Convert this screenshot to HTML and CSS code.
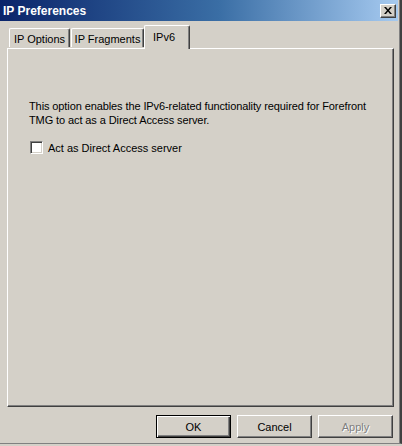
FILE: index.html
```html
<!DOCTYPE html>
<html>
<head>
<meta charset="utf-8">
<link rel="stylesheet" href="styles.css">
</head>
<body>
<div class="window">
  <div class="titlebar">
    <span class="title">IP Preferences</span>
    <span class="close">
      <svg width="8" height="7" viewBox="0 0 8 7"><path d="M0 0h2l2 2.5L6 0h2L5 3.5 8 7H6L4 4.5 2 7H0l3-3.5z" fill="#000"/></svg>
    </span>
  </div>
  <div class="body">
    <div class="tabs">
      <div class="tab t1">IP Options</div>
      <div class="tab t2">IP Fragments</div>
      <div class="tab t3 selected">IPv6</div>
    </div>
    <div class="panel">
      <p class="desc">This option enables the IPv6-related functionality required for Forefront TMG to act as a Direct Access server.</p>
      <label class="check"><span class="box"></span><span>Act as Direct Access server</span></label>
    </div>
    <div class="buttons">
      <div class="btn default"><span>OK</span></div>
      <div class="btn"><span>Cancel</span></div>
      <div class="btn disabled"><span>Apply</span></div>
    </div>
  </div>
</div>
</body>
</html>
```
FILE: styles.css
```css
html, body {
  margin: 0;
  padding: 0;
  background: #d4d0c8;
}
.window {
  width: 400px;
  height: 443px;
  background: #d4d0c8;
  border-right: 2px solid #404040;
  border-bottom: 1px solid #808080;
  box-shadow: inset -1px 0 0 #808080;
  display: flex;
  flex-direction: column;
  font-family: "Liberation Sans", Arial, sans-serif;
  font-size: 11px;
  color: #000;
  overflow: hidden;
}
.titlebar {
  height: 21px;
  margin-right: 2px;
  background: linear-gradient(to right, #0a246a 0%, #3a6ea5 55%, #a6caf0 100%);
  display: flex;
  align-items: center;
  padding-left: 3px;
  padding-right: 2px;
}
.title {
  color: #fff;
  font-weight: bold;
  font-size: 12px;
}
.close {
  margin-left: auto;
  width: 14px;
  height: 12px;
  background: #d4d0c8;
  border-top: 1px solid #fff;
  border-left: 1px solid #fff;
  border-right: 1px solid #404040;
  border-bottom: 1px solid #404040;
  box-shadow: inset -1px -1px 0 #808080;
  display: flex;
  align-items: center;
  justify-content: center;
}
.body {
  flex: 1;
  display: flex;
  flex-direction: column;
  padding: 3px 6px 0 7px;
}
.tabs {
  display: flex;
  align-items: flex-end;
  height: 24px;
  padding-left: 2px;
  position: relative;
  z-index: 1;
}
.tab {
  height: 19px;
  box-sizing: border-box;
  border-top: 1px solid #fff;
  border-left: 1px solid #fff;
  border-right: 1px solid #404040;
  border-radius: 2px 2px 0 0;
  box-shadow: inset -1px 0 0 #808080;
  display: flex;
  align-items: center;
  justify-content: center;
  padding-top: 1px;
  margin-bottom: 1px;
}
.t1 { width: 61px; }
.t2 { width: 73px; margin-left: 1px; }
.t3 { width: 46px; }
.tab.selected {
  height: 24px;
  margin-bottom: -1px;
  background: #d4d0c8;
  padding-bottom: 3px;
  padding-right: 6px;
}
.panel {
  height: 359px;
  box-sizing: border-box;
  border-top: 1px solid #fff;
  border-left: 1px solid #fff;
  border-right: 1px solid #404040;
  border-bottom: 1px solid #404040;
  box-shadow: inset -1px -1px 0 #808080;
  padding: 50px 2px 0 21px;
}
.desc {
  margin: 0;
  line-height: 14px;
  letter-spacing: -0.1px;
}
.check {
  display: flex;
  align-items: center;
  margin-top: 14px;
  margin-left: 1px;
  height: 13px;
}
.box {
  width: 13px;
  height: 13px;
  box-sizing: border-box;
  background: #fff;
  border-top: 1px solid #808080;
  border-left: 1px solid #808080;
  border-right: 1px solid #fff;
  border-bottom: 1px solid #fff;
  box-shadow: inset 1px 1px 0 #404040, inset -1px -1px 0 #d4d0c8;
  margin-right: 5px;
}
.buttons {
  display: flex;
  justify-content: flex-end;
  gap: 6px;
  margin-top: 8px;
  padding-right: 1px;
}
.btn {
  width: 75px;
  height: 23px;
  box-sizing: border-box;
  border-top: 1px solid #fff;
  border-left: 1px solid #fff;
  border-right: 1px solid #404040;
  border-bottom: 1px solid #404040;
  box-shadow: inset -1px -1px 0 #808080;
  display: flex;
  align-items: center;
  justify-content: center;
}
.btn.default {
  border: 1px solid #000;
  box-shadow: inset 1px 1px 0 #fff, inset -1px -1px 0 #404040, inset -2px -2px 0 #808080;
}
.btn.disabled {
  color: #808080;
  text-shadow: 1px 1px 0 #fff;
}
```
